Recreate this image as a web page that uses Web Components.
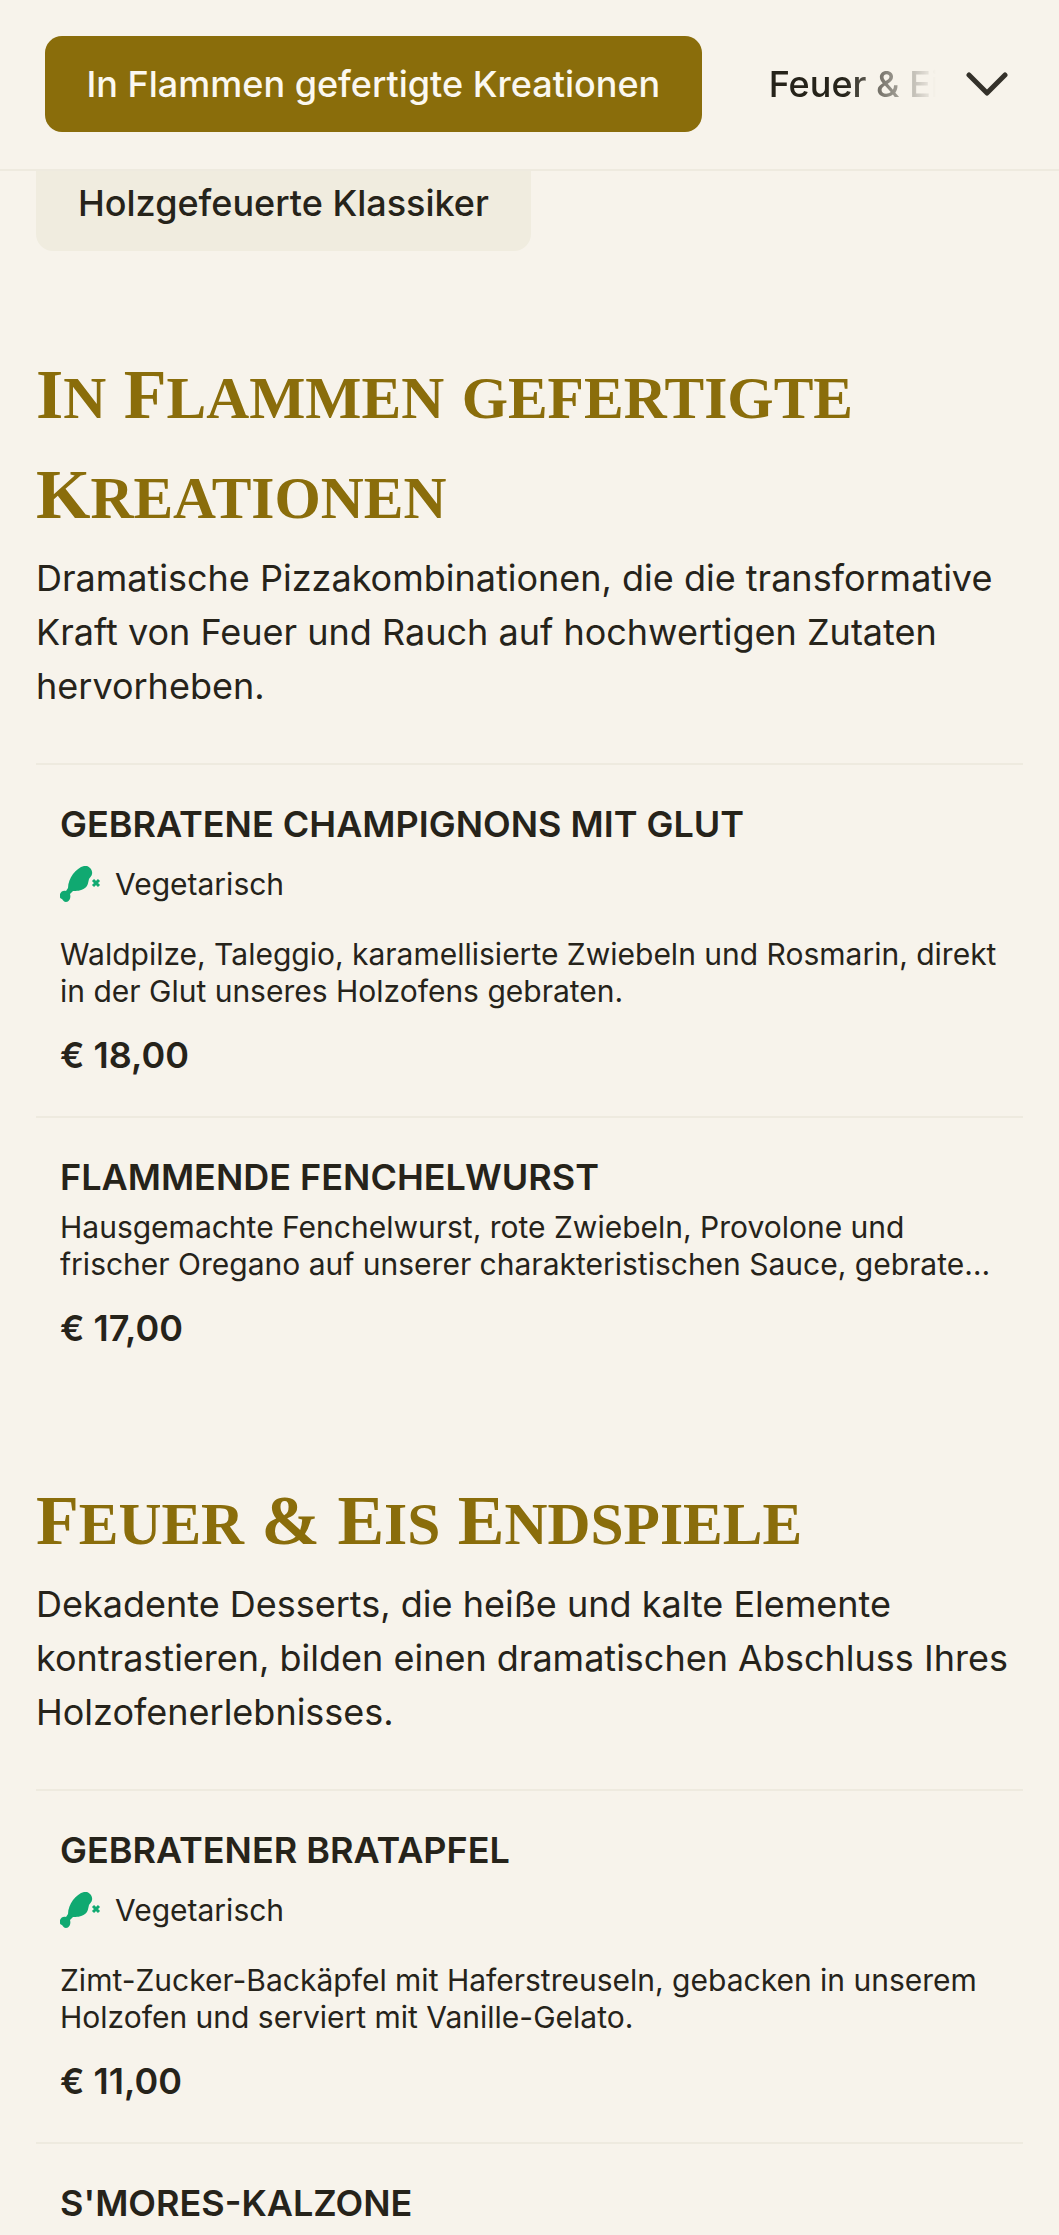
<!DOCTYPE html>
<html lang="de">
<head>
<meta charset="utf-8">
<title>Speisekarte</title>
<style>
  html, body { margin: 0; padding: 0; background: #f7f3eb; }
  body { height: 2235px; overflow: hidden; font-family: Inter, "Liberation Sans", sans-serif; color: #26231a; }
</style>
</head>
<body>
<menu-nav active="In Flammen gefertigte Kreationen" next="Feuer &amp; Eis Endspiele"></menu-nav>
<menu-chip>Holzgefeuerte Klassiker</menu-chip>

<menu-section heading="In Flammen gefertigte Kreationen" class="first">
  <span slot="intro">Dramatische Pizzakombinationen, die die transformative Kraft von Feuer und Rauch auf hochwertigen Zutaten hervorheben.</span>
  <menu-item name="Gebratene Champignons mit Glut" price="€ 18,00" veg>Waldpilze, Taleggio, karamellisierte Zwiebeln und Rosmarin, direkt in der Glut unseres Holzofens gebraten.</menu-item>
  <menu-item name="Flammende Fenchelwurst" price="€ 17,00">Hausgemachte Fenchelwurst, rote Zwiebeln, Provolone und frischer Oregano auf unserer charakteristischen Sauce, gebraten im Holzofen.</menu-item>
</menu-section>

<menu-section heading="Feuer &amp; Eis Endspiele">
  <span slot="intro">Dekadente Desserts, die heiße und kalte Elemente kontrastieren, bilden einen dramatischen Abschluss Ihres Holzofenerlebnisses.</span>
  <menu-item name="Gebratener Bratapfel" price="€ 11,00" veg>Zimt-Zucker-Backäpfel mit Haferstreuseln, gebacken in unserem Holzofen und serviert mit Vanille-Gelato.</menu-item>
  <menu-item name="S'mores-Kalzone"></menu-item>
</menu-section>

<script>
class MenuNav extends HTMLElement {
  constructor() {
    super();
    const root = this.attachShadow({ mode: "open" });
    root.innerHTML = `
      <style>
        :host {
          display: flex;
          align-items: center;
          box-sizing: border-box;
          height: 171px;
          padding: 0 51px 2px 45px;
          border-bottom: 2px solid #eeeadf;
          background: #f7f3eb;
        }
        .active {
          flex: none;
          display: flex;
          align-items: center;
          height: 96px;
          box-sizing: border-box;
          padding: 0 41.5px;
          border-radius: 17px;
          background: #8a6d0b;
          color: #fbf8f0;
          font-size: 36px;
          font-weight: 500;
          white-space: nowrap;
        }
        .next {
          flex: 1;
          min-width: 0;
          margin-left: 67px;
          overflow: hidden;
          white-space: nowrap;
          font-size: 36px;
          font-weight: 500;
          -webkit-mask-image: linear-gradient(to right, #000 45%, transparent 100%);
          mask-image: linear-gradient(to right, #000 45%, transparent 100%);
        }
        svg { flex: none; width: 42px; height: 26px; margin-left: 30px; }
      </style>
      <div class="active"></div>
      <div class="next"></div>
      <svg viewBox="0 0 42 26" fill="none" stroke="#34312a" stroke-width="5" stroke-linecap="round" stroke-linejoin="round">
        <path d="M3 4 L21 22 L39 4"/>
      </svg>`;
    root.querySelector(".active").textContent = this.getAttribute("active");
    root.querySelector(".next").textContent = this.getAttribute("next");
  }
}

class MenuChip extends HTMLElement {
  constructor() {
    super();
    const root = this.attachShadow({ mode: "open" });
    root.innerHTML = `
      <style>
        :host {
          display: block;
          height: 80px;
          padding-left: 36px;
          overflow: hidden;
        }
        div {
          display: flex;
          align-items: center;
          width: fit-content;
          height: 96px;
          margin-top: -16px;
          padding: 0 42px;
          border-radius: 17px;
          background: #f0ecdf;
          font-size: 36px;
          font-weight: 500;
        }
      </style>
      <div><slot></slot></div>`;
  }
}

class MenuSection extends HTMLElement {
  constructor() {
    super();
    const root = this.attachShadow({ mode: "open" });
    root.innerHTML = `
      <style>
        :host {
          display: block;
          padding: 82px 36px 0;
        }
        :host(.first) { padding-top: 94px; }
        h2 {
          margin: 0 0 6px;
          font-family: "Liberation Serif", serif;
          font-size: 70px;
          font-weight: 700;
          line-height: 100px;
          color: #8a6d0b;
        }
        h2 span { font-size: .85em; line-height: 1; text-transform: uppercase; }
        p {
          margin: 0 0 50px;
          font-size: 36px;
          line-height: 54px;
        }
      </style>
      <h2></h2>
      <p><slot name="intro"></slot></p>
      <slot></slot>`;
    // capitals stay big, the rest of each word goes in a smaller uppercase span
    const h2 = root.querySelector("h2");
    this.getAttribute("heading").split(/(\s+)/).forEach((word) => {
      const big = /^\p{Lu}/u.test(word) || !/\p{L}/u.test(word) ? word.slice(0, 1) : "";
      h2.append(big);
      const rest = word.slice(big.length);
      if (rest) {
        const span = document.createElement("span");
        span.textContent = rest;
        h2.append(span);
      }
    });
  }
}

class MenuItem extends HTMLElement {
  constructor() {
    super();
    const root = this.attachShadow({ mode: "open" });
    const veg = this.hasAttribute("veg") ? `
      <div class="veg">
        <svg viewBox="5 5 42 37" width="42" height="37" fill="#10a971">
          <path d="M29 5 C34 4 38 9 37 13 C37 15 35 16 34 18 C33 22 33 25 30 27 C26 30 21 30 18 30 L15 33 C16 36 15 41 11 41 C9 41 8 39 7 38 C5 38 4 35 5 33 C6 30 9 29 11 30 L13 27 C13 22 15 17 18 13 C21 9 25 6 29 5 Z"/>
          <path d="M38 19 L44 25 M44 19 L38 25" fill="none" stroke="#10a971" stroke-width="3"/>
        </svg>
        <span>Vegetarisch</span>
      </div>` : "";
    const price = this.getAttribute("price");
    root.innerHTML = `
      <style>
        :host {
          display: block;
          box-sizing: border-box;
          padding: 37px 24px 39px;
          border-top: 2px solid #eeeadf;
        }
        h3 {
          margin: 0 0 10px;
          font-size: 36px;
          font-weight: 600;
          line-height: 44px;
          text-transform: uppercase;
        }
        .veg {
          display: flex;
          align-items: center;
          gap: 13px;
          height: 44px;
          margin: 16px 0 30px;
          font-size: 30px;
        }
        svg { flex: none; }
        p {
          margin: 0;
          font-size: 30px;
          line-height: 37px;
          display: -webkit-box;
          -webkit-box-orient: vertical;
          -webkit-line-clamp: 2;
          overflow: hidden;
        }
        .price {
          margin-top: 23px;
          font-size: 36px;
          font-weight: 600;
          line-height: 44px;
        }
      </style>
      <h3></h3>
      ${veg}
      <p><slot></slot></p>
      ${price ? '<div class="price"></div>' : ""}`;
    root.querySelector("h3").textContent = this.getAttribute("name");
    if (price) root.querySelector(".price").textContent = price;
  }
}

customElements.define("menu-nav", MenuNav);
customElements.define("menu-chip", MenuChip);
customElements.define("menu-section", MenuSection);
customElements.define("menu-item", MenuItem);
</script>
</body>
</html>
